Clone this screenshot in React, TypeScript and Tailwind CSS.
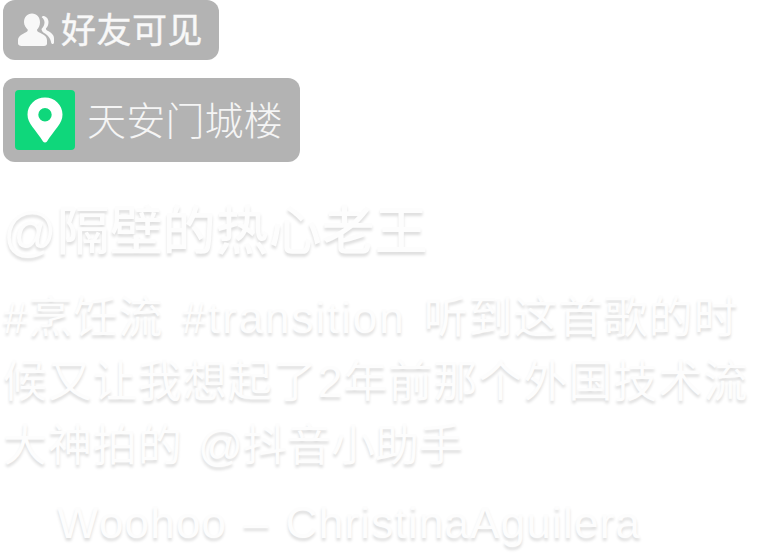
const cjk = "font-['Liberation_Sans','Noto_Sans_CJK_SC',sans-serif]";

function UsersIcon() {
  return (
    <svg viewBox="0 0 36 34" className="w-[36px] h-[34px] shrink-0" fill="#f8f8f8">
      <path d="M14 0.500c4.800 0 8 3.900 8 8.800 0 3.200-1.300 5.800-3 7.400 0 1.200.6 2 1.800 2.600 3 1.500 8 3.200 8.200 7.700v3.500c0 1.600-1.200 2.500-3 2.500H3.500C1.500 33 0 32 0 30.500V27c0-4 5.500-6.500 8-7.700 1.300-.6 1.800-1.400 1.800-2.600-1.700-1.600-3.800-4.200-3.800-7.400C6 4.400 9.200.5 14 .5z" />
      <path d="M24 3c3.500-.5 6.500 2.200 6.500 6 0 2.800-1 5-2.500 6.300-.2 1.200.3 1.900 1.500 2.500 3 1.500 6.500 3.700 6.500 7.700v4c0 .9-.6 1.500-1.400 1.500-.8 0-1.400-.6-1.500-1.500-.4-4.200-3.500-7.500-7-9.500-1.500-1-2.600-2.500-2.600-4 1.800-2 3-4 3-6.500 0-2.400-1.300-4-2.500-5-.5-.5 0-1 1-1.300z" />
    </svg>
  );
}

function PinIcon() {
  return (
    <svg viewBox="0 0 36 46" className="w-[36px] h-[46px]">
      <path
        fillRule="evenodd"
        fill="#ffffff"
        d="M18 0.500C8.300 0.500 0.500 8 0.500 17.500c0 4.800 2 8.500 5 12.500 3.500 4.700 7.500 9.700 10.500 14.500 1 1.300 3 1.300 4 0 3-4.800 7-9.800 10.500-14.500 3-4 5-7.700 5-12.500C35.500 8 27.700 0.500 18 0.500zM18 11a6.700 6.700 0 1 1 0 13.400A6.700 6.700 0 0 1 18 11z"
      />
    </svg>
  );
}

export default function App() {
  return (
    <div className={`w-[782px] h-[553px] overflow-hidden bg-white ${cjk}`}>
      <div className="pl-[3px] flex flex-col items-start">
        <div className="h-[60px] w-[216px] rounded-[12px] bg-[#b3b3b3] flex items-center pl-[15px] gap-[7px]">
          <UsersIcon />
          <span className="mt-[2px] text-[35px] leading-[40px] tracking-[0.5px] text-[#f8f8f8] [-webkit-text-stroke:0.4px_#f8f8f8] whitespace-nowrap">好友可见</span>
        </div>
        <div className="mt-[18px] h-[84px] w-[297px] rounded-[12px] bg-[#b3b3b3] flex items-center pl-[12px] gap-[12px]">
          <div className="w-[60px] h-[60px] rounded-[4px] bg-[#0fd77b] flex items-center justify-center">
            <PinIcon />
          </div>
          <span className="mt-[3px] text-[39px] leading-[48px] tracking-[0.2px] font-light text-[#f5f5f5] whitespace-nowrap">天安门城楼</span>
        </div>
      </div>

      <div className="mt-[39px] pl-[3px] text-[#fdfdfd] [text-shadow:0_3px_3px_rgba(0,0,0,0.13)]">
        <div className="text-[53px] leading-[62px] font-medium whitespace-nowrap">@隔壁的热心老王</div>
        <div className="mt-[23px] w-[760px] text-[44px] leading-[64px] tracking-[1px]">
          <div className="whitespace-nowrap [word-spacing:5px]">#烹饪流 <span className="tracking-[1.9px]">#transition</span> 听到这首歌的时</div>
          <div className="whitespace-nowrap">候又让我想起了2年前那个外国技术流</div>
          <div className="whitespace-nowrap [word-spacing:2px]">大神拍的 <span className="tracking-[0px]">@抖音小助手</span></div>
        </div>
        <div className="mt-[15px] pl-[54px] text-[44px] leading-[60px] tracking-[1.2px] [word-spacing:3px] whitespace-nowrap">Woohoo – ChristinaAguilera</div>
      </div>
    </div>
  );
}
